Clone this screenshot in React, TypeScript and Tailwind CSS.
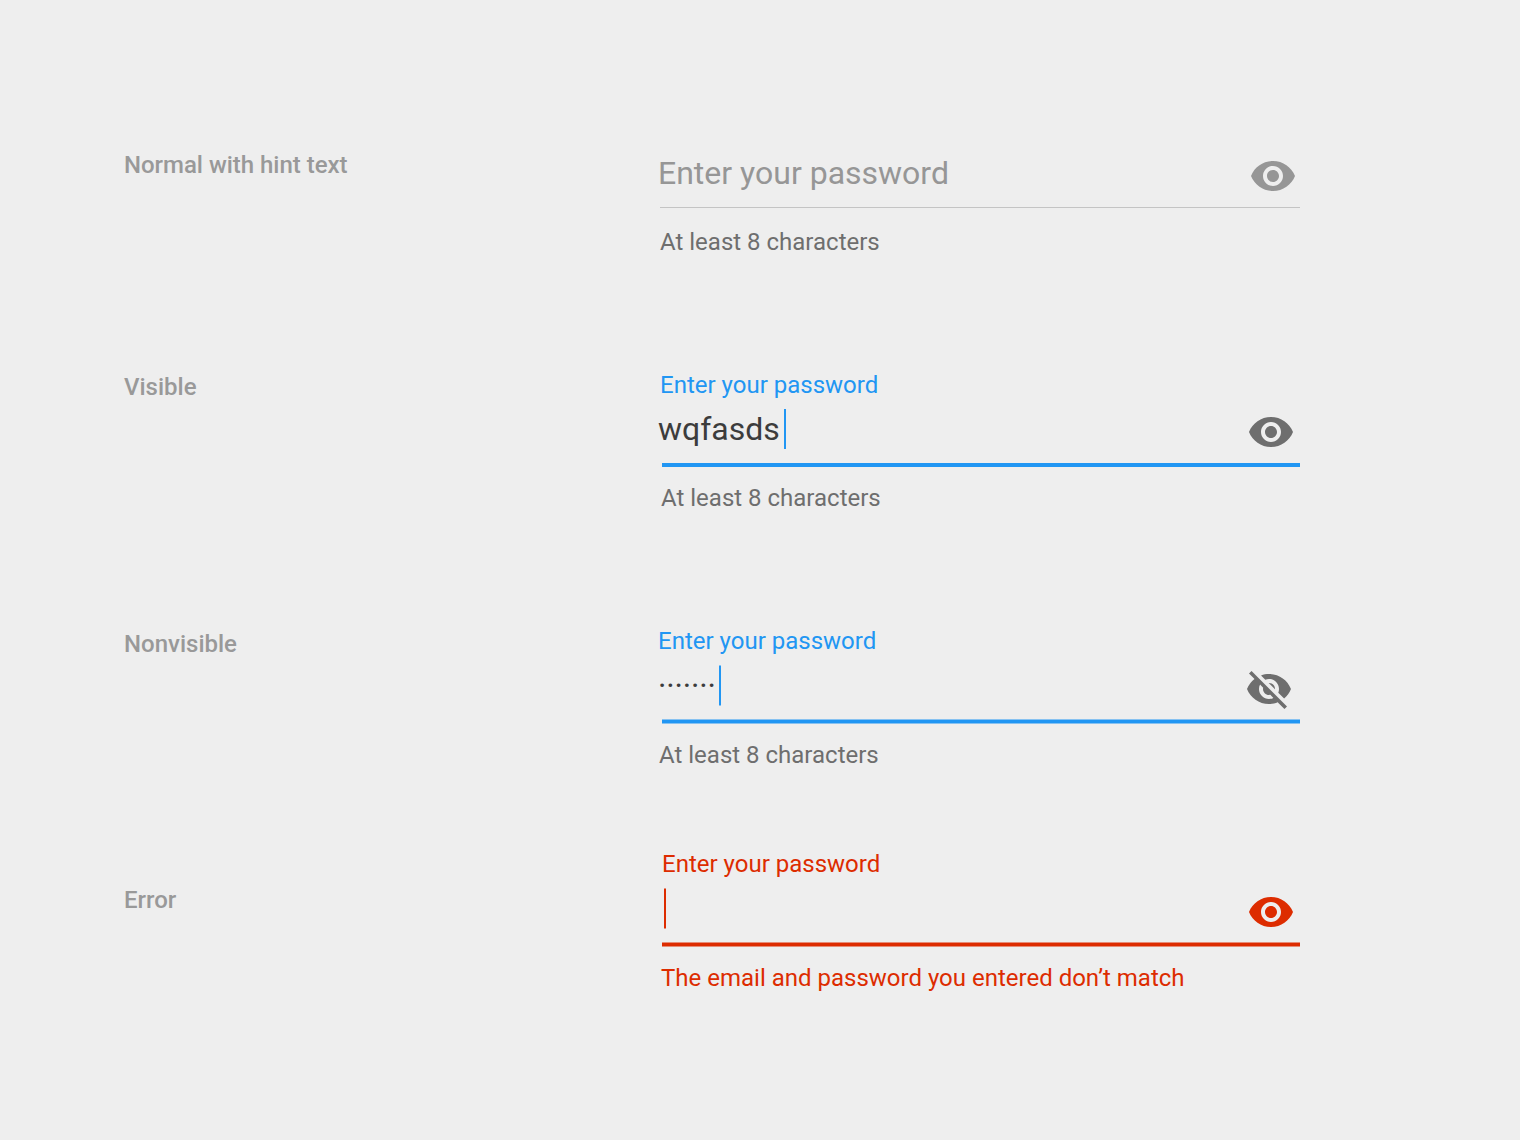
import { MdVisibility, MdVisibilityOff } from "react-icons/md";

type FieldProps = {
  title: string;
  row: string;
  titleOffset: string;
  label?: string;
  labelClass?: string;
  value?: string;
  valueClass?: string;
  cursor?: string;
  line: string;
  helper: string;
  helperClass: string;
  hidden?: boolean;
  iconClass: string;
};

function Field(p: FieldProps) {
  const Icon = p.hidden ? MdVisibilityOff : MdVisibility;
  return (
    <section className={`flex pl-[124px] text-[24px] leading-8 ${p.row}`}>
      <h2 className={`w-[534px] shrink-0 font-medium text-[#999999] ${p.titleOffset}`}>{p.title}</h2>
      <div className="w-[641.5px]">
        <div className={`h-8 ${p.labelClass ?? ""}`}>{p.label}</div>
        <div className="flex h-[62px] items-start justify-between">
          <div className="flex pt-1">
            <span className={`leading-[48px] ${p.valueClass ?? ""}`}>{p.value}</span>
            {p.cursor && <span className={`h-10 w-0.5 ${p.cursor}`} />}
          </div>
          <Icon size={48} className={`shrink-0 ${p.iconClass}`} />
        </div>
        <div className={p.line} />
        <p className={`whitespace-nowrap ${p.helperClass}`}>{p.helper}</p>
      </div>
    </section>
  );
}

export default function App() {
  return (
    <main className="h-[1140px] w-[1520px] overflow-hidden bg-[#eeeeee] pt-[114px] font-['Roboto',sans-serif]">
      <Field
        title="Normal with hint text"
        row="h-[255px]"
        titleOffset="pt-[35px] tracking-[-0.02px]"
        value="Enter your password"
        valueClass="-mt-px text-[32px] text-[#969696]"
        line="mt-[-1px] ml-0.5 h-px bg-[#c4c4c4]"
        helper="At least 8 characters"
        helperClass="pt-[18px] pl-0.5 text-[#6e6e6e]"
        iconClass="mt-[6px] mr-[2.2px] text-[#969696]"
      />
      <Field
        title="Visible"
        row="h-[257px]"
        titleOffset="pt-[2px]"
        label="Enter your password"
        labelClass="pl-[2px] text-[#2196f3]"
        value="wqfasds"
        valueClass="text-[32px] text-[#3c3c3c]"
        cursor="mt-[4px] ml-[4px] bg-[#2196f3]"
        line="ml-1 h-1 bg-[#2196f3]"
        helper="At least 8 characters"
        helperClass="pt-[15px] pl-[3px] text-[#6e6e6e]"
        iconClass="mt-[7px] mr-[4.2px] text-[#6e6e6e]"
      />
      <Field
        title="Nonvisible"
        row="h-[223px]"
        titleOffset="pt-[2px]"
        label="Enter your password"
        labelClass="-mt-px mb-px text-[#2196f3]"
        value="·······"
        valueClass="text-[32px] tracking-[-0.1px] text-[#3c3c3c]"
        cursor="mt-[3.5px] ml-[3px] translate-y-[-0.5px] bg-[#2196f3]"
        line="ml-1 h-1 translate-y-[-0.5px] bg-[#2196f3]"
        helper="At least 8 characters"
        helperClass="pt-[15px] pl-[1px] text-[#6e6e6e]"
        hidden
        iconClass="mt-[6.6px] mr-[6.2px] text-[#6e6e6e]"
      />
      <Field
        title="Error"
        row="h-[180px]"
        titleOffset="pt-[35px]"
        label="Enter your password"
        labelClass="-mt-px mb-px pl-[4px] text-[#dd2c00]"
        cursor="mt-[4px] ml-[6px] translate-y-[-0.5px] bg-[#dd2c00]"
        line="ml-1 h-1 translate-y-[-0.5px] bg-[#dd2c00]"
        helper="The email and password you entered don’t match"
        helperClass="pt-[15px] pl-[3px] text-[#dd2c00]"
        iconClass="mt-[7px] mr-[4.2px] text-[#dd2c00]"
      />
    </main>
  );
}
